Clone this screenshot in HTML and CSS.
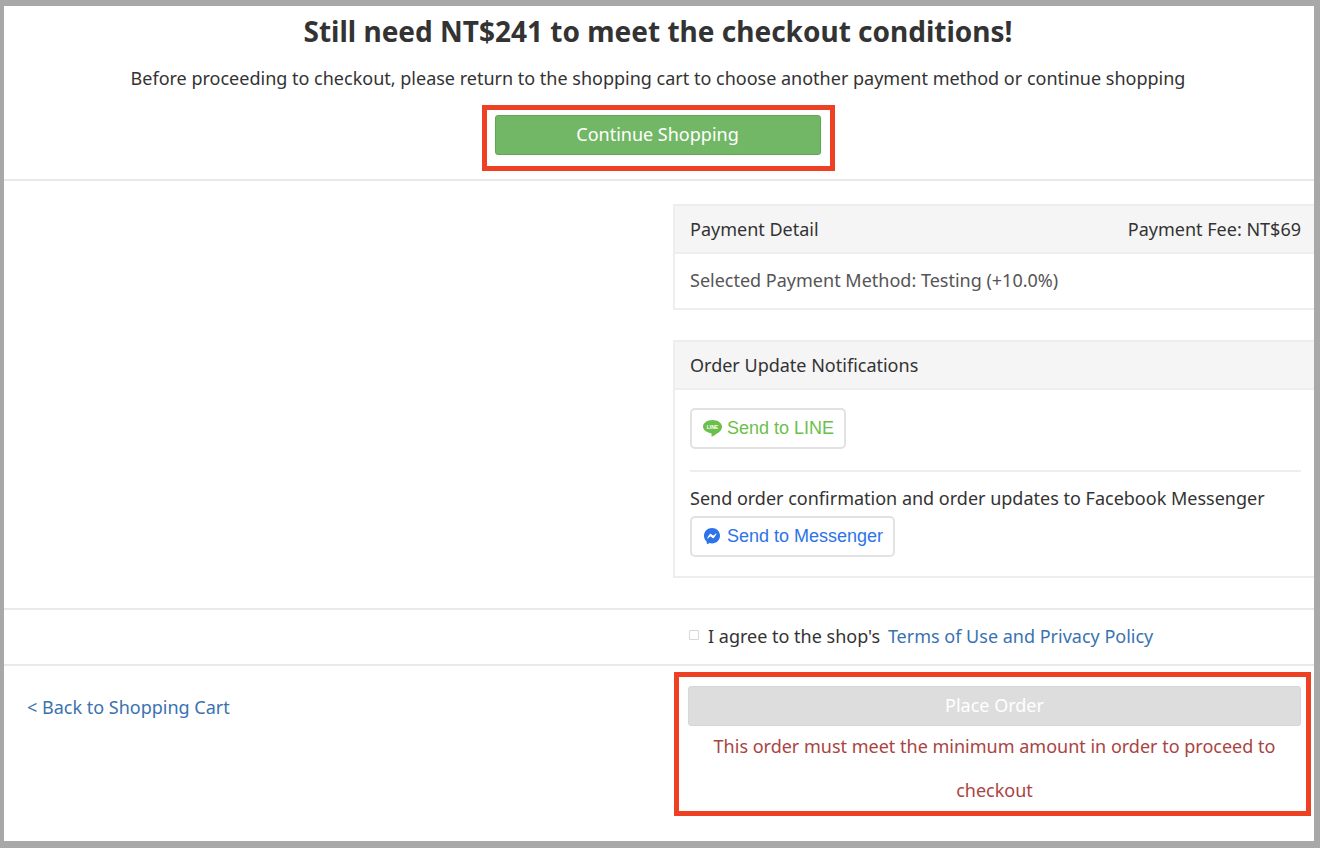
FILE: index.html
```html
<!DOCTYPE html>
<html lang="en">
<head>
  <meta charset="UTF-8" />
  <title>Checkout</title>
  <link rel="stylesheet" href="styles.css">
</head>
<body>
  <main class="page">
    <section class="notice">
      <h2>Still need NT$241 to meet the checkout conditions!</h2>
      <p>Before proceeding to checkout, please return to the shopping cart to choose another payment method or continue shopping</p>
      <div class="callout callout-shop">
        <a href="#" class="btn btn-success">Continue Shopping</a>
      </div>
    </section>

    <section class="panels">
      <div class="col-right">
        <div class="panel">
          <div class="panel-heading">
            <span>Payment Detail</span>
            <span>Payment Fee: NT$69</span>
          </div>
          <div class="panel-body panel-body-muted">Selected Payment Method: Testing (+10.0%)</div>
        </div>

        <div class="panel panel-notify">
          <div class="panel-heading">
            <span>Order Update Notifications</span>
          </div>
          <div class="panel-body panel-body-notify">
            <a href="#" class="send-btn send-line">
              <svg class="send-icon" width="19" height="17" viewBox="0 0 19 17">
                <path fill="#6cbf4b" d="M9.5 0C4.3 0 0 2.900 0 6.600c0 3.300 3.200 6 7.800 6.600.6.100.9.400.8 1l-.1 1.900c0 .5.300.7.800.4 2-1.100 6.200-3.400 8-5.500 1.100-1.200 1.700-2.600 1.700-4.400C19 2.900 14.700 0 9.500 0z"/>
                <text x="9.500" y="8.600" text-anchor="middle" class="line-mark">LINE</text>
              </svg>
              Send to LINE
            </a>
            <hr class="divider" />
            <p class="send-text">Send order confirmation and order updates to Facebook Messenger</p>
            <a href="#" class="send-btn send-messenger">
              <svg class="send-icon" width="16" height="17" viewBox="0 0 16 17">
                <path fill="#2d73ea" d="M8 0C3.500 0 0 3.300 0 7.700c0 2.300 1 4.300 2.500 5.700.2.200.2.300.2.500l.1 1.400c0 .5.500.8.900.6l1.600-.7c.1-.1.300-.1.500-.1.700.2 1.500.3 2.200.3 4.500 0 8-3.300 8-7.700S12.500 0 8 0z"/>
                <path fill="#fff" d="M3.200 10l2.400-3.700c.3-.5 1-.7 1.500-.3l1.900 1.400c.2.100.4.100.5 0l2.500-1.900c.3-.2.800.1.500.5l-2.400 3.700c-.3.500-1 .7-1.500.3L6.700 8.600c-.2-.1-.4-.1-.5 0l-2.500 1.900c-.3.200-.8-.1-.5-.5z"/>
              </svg>
              Send to Messenger
            </a>
          </div>
        </div>
      </div>
    </section>

    <section class="terms">
      <label class="col-right terms-label">
        <input type="checkbox" class="terms-check" />
        <span>I agree to the shop's <a href="#" class="terms-link">Terms of Use and Privacy Policy</a></span>
      </label>
    </section>

    <section class="actions">
      <a href="#" class="back-link">&lt; Back to Shopping Cart</a>
      <div class="callout callout-order">
        <button type="button" class="btn btn-disabled" disabled>Place Order</button>
        <p class="min-warning">This order must meet the minimum amount in order to proceed to checkout</p>
      </div>
    </section>
  </main>
</body>
</html>
```

FILE: styles.css
```css
* {
  box-sizing: border-box;
}

html,
body {
  height: 848px;
  margin: 0;
  overflow: hidden;
}

body {
  padding: 6px 6px 7px 4px;
  background-color: #a8a8a8;
  font-family: "Noto Sans", sans-serif;
  font-size: 18px;
  color: #333;
}

a {
  color: #3a72b0;
  text-decoration: none;
}

.page {
  height: 835px;
  background: white;
  overflow: hidden;
}

.notice {
  display: flex;
  flex-direction: column;
  align-items: center;
  height: 175px;
  padding: 6px 2px 0 0;
  border-bottom: 2px solid #e9e9e9;
}

.notice h2 {
  margin: 0;
  font-size: 28px;
  font-weight: 700;
  line-height: 38px;
}

.notice p {
  margin: 17px 0 16px;
  line-height: 22px;
}

.callout {
  border: 5px solid #ee4023;
}

.callout-shop {
  padding: 5px 9px 11px 8px;
}

.btn {
  display: block;
  height: 40px;
  border-radius: 3px;
  font-family: inherit;
  font-size: 18px;
  font-weight: 400;
  line-height: 36px;
  color: white;
  text-align: center;
}

.btn-success {
  width: 326px;
  background-color: #72b766;
  border: 1px solid #5fa653;
}

.btn-disabled {
  width: 100%;
  padding: 0 0 2px;
  background-color: #ddd;
  border: 1px solid #d6d6d6;
}

.panels {
  padding-top: 23px;
}

.col-right {
  width: 645px;
  margin-left: 669px;
}

.panel {
  border: 2px solid #eee;
}

.panel-notify {
  margin-top: 30px;
}

.panel-heading {
  display: flex;
  justify-content: space-between;
  height: 48px;
  padding: 0 15px;
  background-color: #f5f5f5;
  border-bottom: 2px solid #eee;
  line-height: 46px;
}

.panel-body {
  padding: 0 15px;
}

.panel-body-muted {
  height: 54px;
  color: #555;
  line-height: 52px;
}

.panel-body-notify {
  height: 186px;
  padding-top: 18px;
}

.send-btn {
  display: inline-flex;
  align-items: center;
  height: 41px;
  padding: 0 10px 0 11px;
  background: white;
  border: 2px solid #e2e2e2;
  border-radius: 5px;
  font-family: "Liberation Sans", sans-serif;
  font-size: 18px;
}

.send-icon {
  flex: none;
  margin-right: 5px;
}

.send-line {
  color: #6cbf4b;
}

.send-messenger {
  color: #2d73ea;
  padding-left: 12px;
  padding-right: 10px;
}

.send-messenger .send-icon {
  margin-right: 7px;
}

.line-mark {
  font-family: "Liberation Sans", sans-serif;
  font-size: 5px;
  font-weight: 700;
  fill: white;
}

.divider {
  height: 2px;
  margin: 21px 0 15px;
  background-color: #eee;
  border: 0;
}

.send-text {
  margin: 0 0 7px;
  line-height: 22px;
}

.terms {
  height: 58px;
  margin-top: 30px;
  border-top: 2px solid #e9e9e9;
  border-bottom: 2px solid #e9e9e9;
}

.terms-label {
  display: flex;
  align-items: center;
  height: 52px;
  padding-left: 16px;
}

.terms-check {
  flex: none;
  width: 10px;
  height: 10px;
  margin: 0 9px 2px 0;
  appearance: none;
  background: white;
  border: 1px solid #d8d8d8;
  border-radius: 1px;
}

.terms-link {
  margin-left: 3px;
}

.actions {
  display: flex;
  justify-content: space-between;
  padding-top: 6px;
}

.back-link {
  margin: 24px 0 0 23px;
  line-height: 22px;
}

.callout-order {
  width: 637px;
  margin-right: 3px;
  padding: 9px 5px 0 9px;
}

.min-warning {
  margin: -2px 0 -1px;
  color: #a94442;
  line-height: 44px;
  text-align: center;
}
```
